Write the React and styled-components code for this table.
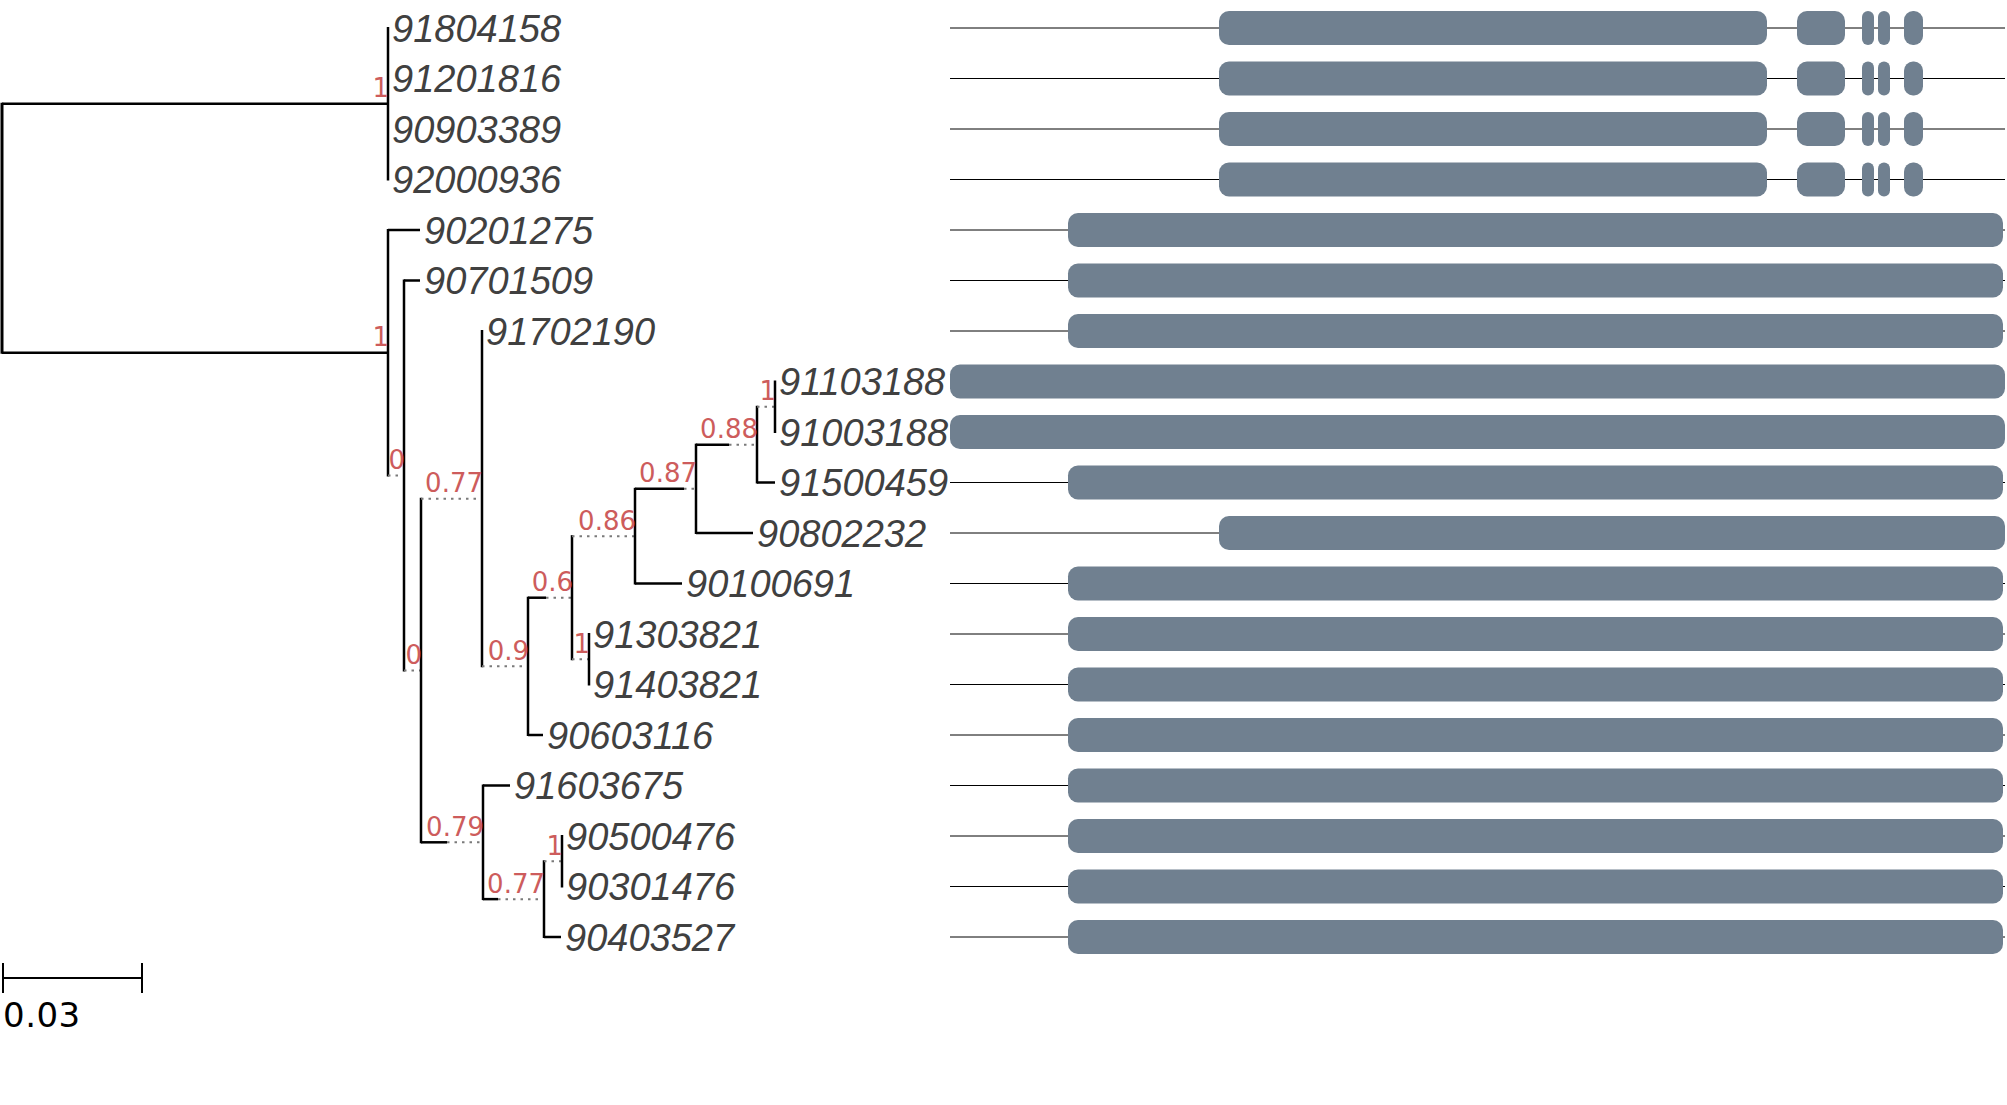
import React from 'react'
import styled, { createGlobalStyle } from 'styled-components'

const GlobalStyle = createGlobalStyle`
	html, body {
		margin: 0;
		padding: 0;
		background: #fff;
	}
	body {
		font-family: 'DejaVu Sans', sans-serif;
	}
`

const ROW0 = 28
const ROW_H = 50.5
const rowY = i => ROW0 + ROW_H * i

const LEAVES = [
	{ name: '91804158', track: 'split' },
	{ name: '91201816', track: 'split' },
	{ name: '90903389', track: 'split' },
	{ name: '92000936', track: 'split' },
	{ name: '90201275', track: 'long' },
	{ name: '90701509', track: 'long' },
	{ name: '91702190', track: 'long' },
	{ name: '91103188', track: 'full' },
	{ name: '91003188', track: 'full' },
	{ name: '91500459', track: 'long' },
	{ name: '90802232', track: 'short' },
	{ name: '90100691', track: 'long' },
	{ name: '91303821', track: 'long' },
	{ name: '91403821', track: 'long' },
	{ name: '90603116', track: 'long' },
	{ name: '91603675', track: 'long' },
	{ name: '90500476', track: 'long' },
	{ name: '90301476', track: 'long' },
	{ name: '90403527', track: 'long' },
]

// gene models, x relative to the track panel (starts at 950)
const TRACKS = {
	split: [
		{ x1: 269, x2: 817, r: 10 },
		{ x1: 847, x2: 895, r: 10 },
		{ x1: 912, x2: 924, r: 6 },
		{ x1: 928, x2: 940, r: 6 },
		{ x1: 954, x2: 973, r: 9 },
	],
	long: [{ x1: 118, x2: 1053, r: 10 }],
	full: [{ x1: 0, x2: 1055, r: 10 }],
	short: [{ x1: 269, x2: 1055, r: 10 }],
}

const leaf = (i, x) => ({ leaf: i, x })

// x = position of node; solid = where the solid part of its branch stops
const TREE = {
	x: 2,
	children: [
		{ x: 388, solid: 388, support: '1', children: [leaf(0, 388), leaf(1, 388), leaf(2, 388), leaf(3, 388)] },
		{
			x: 388, solid: 388, support: '1',
			children: [
				leaf(4, 420),
				{
					x: 404, solid: 388, support: '0',
					children: [
						leaf(5, 420),
						{
							x: 421, solid: 404, support: '0',
							children: [
								{
									x: 482, solid: 421, support: '0.77',
									children: [
										leaf(6, 482),
										{
											x: 528, solid: 482, support: '0.9',
											children: [
												{
													x: 572, solid: 546, support: '0.6',
													children: [
														{
															x: 635, solid: 572, support: '0.86',
															children: [
																{
																	x: 696, solid: 684, support: '0.87',
																	children: [
																		{
																			x: 757, solid: 729, support: '0.88',
																			children: [
																				{ x: 775, solid: 757, support: '1', children: [leaf(7, 775), leaf(8, 775)] },
																				leaf(9, 775),
																			],
																		},
																		leaf(10, 753),
																	],
																},
																leaf(11, 682),
															],
														},
														{ x: 589, solid: 572, support: '1', children: [leaf(12, 589), leaf(13, 589)] },
													],
												},
												leaf(14, 543),
											],
										},
									],
								},
								{
									x: 483, solid: 447, support: '0.79',
									children: [
										leaf(15, 510),
										{
											x: 544, solid: 498, support: '0.77',
											children: [
												{ x: 562, solid: 544, support: '1', children: [leaf(16, 562), leaf(17, 562)] },
												leaf(18, 561),
											],
										},
									],
								},
							],
						},
					],
				},
			],
		},
	],
}

const layout = node => {
	if (node.leaf !== undefined) return { ...node, y: rowY(node.leaf) }
	const children = node.children.map(layout)
	const y = (children[0].y + children[children.length - 1].y) / 2
	return { ...node, children, y }
}

const Page = styled.div`
	width: 2007px;
	height: 1105px;
	display: flex;
	flex-direction: column;
	background: #fff;
`

const Figure = styled.div`
	display: flex;
	align-items: flex-start;
	height: 963px;
`

const Chart = styled.svg`
	display: block;
	flex: none;
	overflow: visible;
`

const Branch = styled.line`
	stroke: ${p => (p.$dotted ? '#7a7a7a' : '#000')};
	stroke-width: ${p => p.$w || 2.5};
	stroke-dasharray: ${p => (p.$dotted ? '2.5 5' : 'none')};
`

const LeafName = styled.text`
	font-family: 'Liberation Sans', Arial, sans-serif;
	font-style: italic;
	font-size: 38px;
	fill: #404040;
`

const Support = styled.text`
	font-family: 'DejaVu Sans', sans-serif;
	font-size: 26px;
	fill: #cd5c5c;
	text-anchor: end;
`

const TrackLine = styled.line`
	stroke: #000;
	stroke-width: 1;
`

const Exon = styled.rect`
	fill: slategray;
`

const ScaleBar = styled.div`
	margin-left: 2px;
	width: 137px;
	height: 30px;
	border-left: 2px solid #000;
	border-right: 2px solid #000;
	background: linear-gradient(#000, #000) center / 100% 2px no-repeat;
`

const ScaleLabel = styled.div`
	margin: 5px 0 0 3px;
	font-family: 'DejaVu Sans', sans-serif;
	font-size: 34px;
	line-height: 34px;
	letter-spacing: 0.5px;
	color: #000;
`

const renderNode = (node, parentX, out) => {
	if (node.leaf !== undefined) {
		if (node.x > parentX) {
			out.push(<Branch key={`lb${node.leaf}`} x1={parentX} x2={node.x} y1={node.y} y2={node.y} />)
		}
		out.push(
			<LeafName key={`ln${node.leaf}`} x={node.x + 4} y={node.y + 13.5}>
				{LEAVES[node.leaf].name}
			</LeafName>
		)
		return
	}
	const id = `${node.x}-${node.y}`
	if (parentX !== null) {
		if (node.solid > parentX) {
			out.push(<Branch key={`s${id}`} x1={parentX} x2={node.solid} y1={node.y} y2={node.y} />)
		}
		if (node.x > node.solid) {
			out.push(<Branch key={`d${id}`} $dotted $w={2} x1={node.solid} x2={node.x} y1={node.y} y2={node.y} />)
		}
	}
	const first = node.children[0].y
	const last = node.children[node.children.length - 1].y
	out.push(<Branch key={`v${id}`} $w={parentX === null ? 3 : 2.5} x1={node.x} x2={node.x} y1={first - 1} y2={last + 1} />)
	node.children.forEach(c => renderNode(c, node.x, out))
	if (node.support) {
		out.push(
			<Support key={`t${id}`} x={node.x + 1} y={node.y - 6.5}>
				{node.support}
			</Support>
		)
	}
}

const Tree = () => {
	const root = layout(TREE)
	const parts = []
	renderNode(root, null, parts)
	return (
		<Chart width={950} height={963} viewBox='0 0 950 963'>
			{parts}
		</Chart>
	)
}

const Tracks = () => (
	<Chart width={1057} height={963} viewBox='0 0 1057 963'>
		{LEAVES.map((l, i) => {
			const y = rowY(i)
			return (
				<g key={l.name}>
					<TrackLine x1={0} x2={1055} y1={y} y2={y} />
					{TRACKS[l.track].map((b, j) => (
						<Exon key={j} x={b.x1} y={y - 17} width={b.x2 - b.x1} height={34} rx={b.r} ry={b.r} />
					))}
				</g>
			)
		})}
	</Chart>
)

const App = () => (
	<Page>
		<GlobalStyle />
		<Figure>
			<Tree />
			<Tracks />
		</Figure>
		<ScaleBar />
		<ScaleLabel>0.03</ScaleLabel>
	</Page>
)

export default App
